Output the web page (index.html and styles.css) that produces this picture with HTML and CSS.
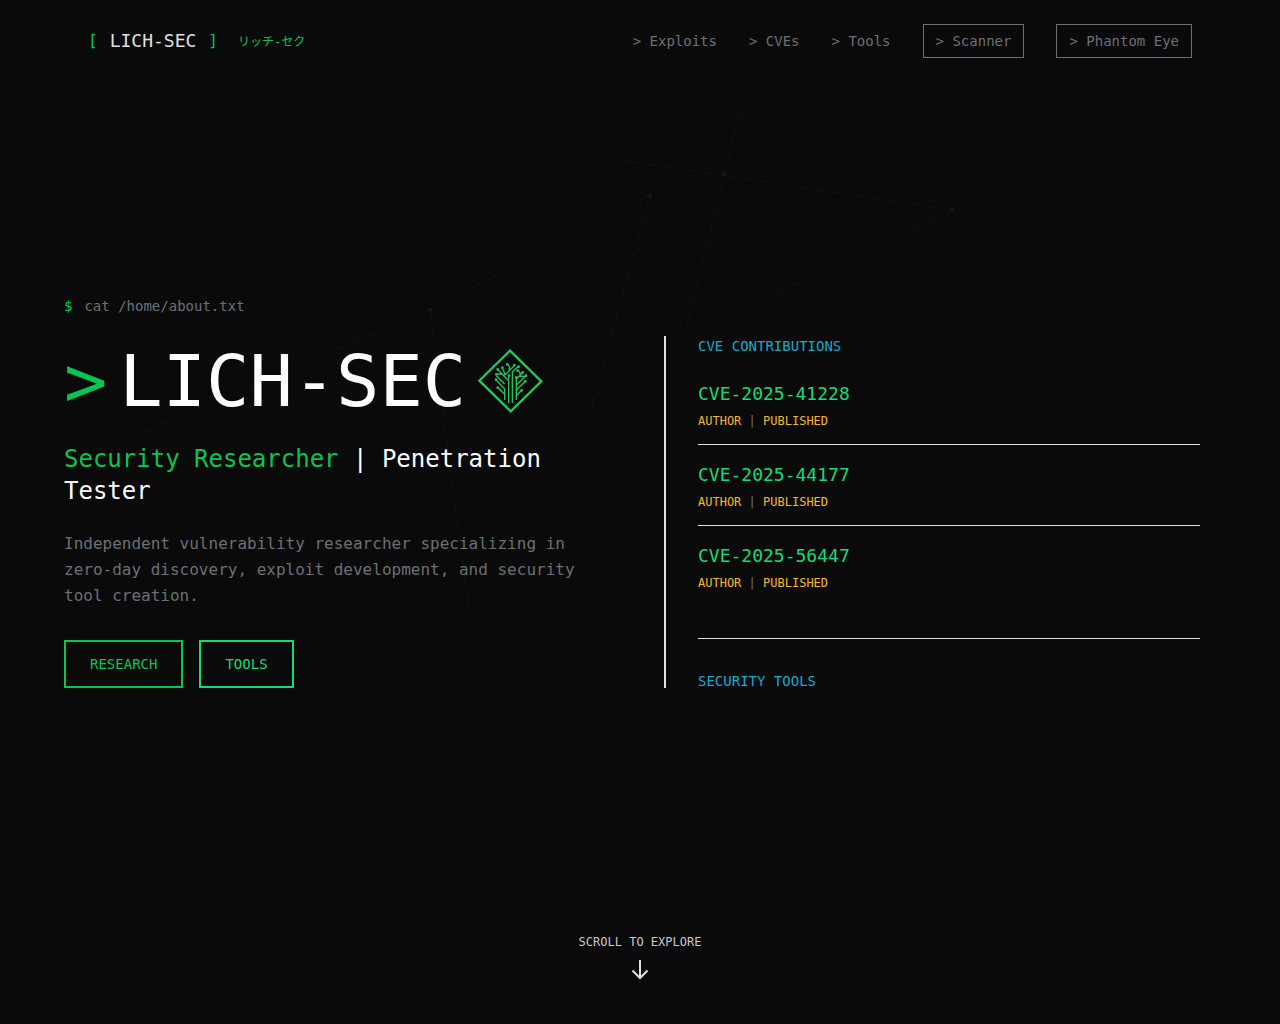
FILE: index.html
```html
<!DOCTYPE html>
<html lang="en">
<head>
<meta charset="utf-8">
<meta name="viewport" content="width=device-width, initial-scale=1">
<title>LICH-SEC</title>
<link rel="stylesheet" href="styles.css">
</head>
<body>
<svg class="network" viewBox="0 0 1280 1024" preserveAspectRatio="xMidYMid slice" aria-hidden="true">
  <path d="M626 161 952 210 686 336M952 210 780 390M740 110 724 176 686 330M650 195 430 310 135 436M650 195 588 420M430 310 470 620M515 752 526 785M588 420 560 450"/>
  <circle cx="952" cy="210" r="2"/><circle cx="650" cy="196" r="2"/><circle cx="430" cy="310" r="2"/><circle cx="724" cy="174" r="2"/>
</svg>
<div class="page">
  <header class="header">
    <a class="brand" href="#">
      <span class="bracket">[</span>
      <span class="brand-name">LICH-SEC</span>
      <span class="bracket">]</span>
      <span class="brand-kana" lang="ja">リッチ-セク</span>
    </a>
    <nav class="nav">
      <a href="#exploits">&gt; Exploits</a>
      <a href="#cves">&gt; CVEs</a>
      <a href="#tools">&gt; Tools</a>
      <a class="boxed" href="#scanner">&gt; Scanner</a>
      <a class="boxed" href="#phantom">&gt; Phantom Eye</a>
    </nav>
  </header>

  <main class="hero">
    <p class="prompt"><span class="dollar">$</span>cat /home/about.txt</p>
    <div class="columns">
      <section class="intro">
        <h1 class="title">
          <span class="caret">&gt;</span>
          <span>LICH-SEC</span>
          <svg class="logo" viewBox="24 27 192 192" aria-hidden="true">
            <path class="frame" d="M120 32 214 124 122 214 28 122Z"/>
            <path class="trace" d="M104 180V146L78 120M104 163 84 143M116 189V122L96 102H80M104 132 79 107M127 189V96L146 78M100 105 82 88M104 106V100L97 84M106 104 134 76M118 92V80L112 73M116 118V108M139 180V136L168 107M139 150 166 124M139 167 156 150M139 136V112M139 118 158 98M150 108V98L143 90M148 109H166"/>
            <g class="node"><circle cx="78" cy="119" r="4"/><circle cx="79" cy="103" r="4"/><circle cx="83" cy="143" r="4"/><circle cx="83" cy="88" r="4"/><circle cx="97" cy="83" r="4"/><circle cx="112" cy="73" r="4"/><circle cx="133" cy="75" r="4"/><circle cx="146" cy="80" r="4"/><circle cx="143" cy="92" r="4"/><circle cx="158" cy="97" r="4"/><circle cx="168" cy="107" r="4"/><circle cx="166" cy="124" r="4"/><circle cx="155" cy="151" r="4"/><circle cx="117" cy="107" r="4"/><circle cx="139" cy="112" r="4"/></g>
          </svg>
        </h1>
        <h2 class="role"><span>Security Researcher</span> | Penetration Tester</h2>
        <p class="bio">Independent vulnerability researcher specializing in zero-day discovery, exploit development, and security tool creation.</p>
        <div class="actions">
          <button class="btn" type="button">RESEARCH</button>
          <button class="btn btn-bright" type="button">TOOLS</button>
        </div>
      </section>

      <aside class="panel">
        <section>
          <h3 class="panel-heading">CVE CONTRIBUTIONS</h3>
          <ul class="cves">
            <li><a href="#cve-2025-41228">CVE-2025-41228</a><p class="meta">AUTHOR <span>|</span> PUBLISHED</p></li>
            <li><a href="#cve-2025-44177">CVE-2025-44177</a><p class="meta">AUTHOR <span>|</span> PUBLISHED</p></li>
            <li><a href="#cve-2025-56447">CVE-2025-56447</a><p class="meta">AUTHOR <span>|</span> PUBLISHED</p></li>
          </ul>
        </section>
        <section class="panel-next">
          <h3 class="panel-heading">SECURITY TOOLS</h3>
        </section>
      </aside>
    </div>
  </main>

  <footer class="scroll">
    <span>SCROLL TO EXPLORE</span>
    <svg class="arrow" viewBox="0 0 24 24" aria-hidden="true"><path d="M12 2V20M4.500 12.500l7.500 7.500 7.500-7.500"/></svg>
  </footer>
</div>
</body>
</html>
```
FILE: styles.css
```css
:root {
  --bg: #0a0a0a;
  --green: #08c454;
  --bright: #12dc76;
  --line: #e0e0e0;
  --muted: #6b7075;
}

* { box-sizing: border-box; }

body {
  margin: 0;
  background: var(--bg);
  color: #fff;
  font-family: "DejaVu Sans Mono", "Noto Sans CJK JP", monospace;
}

h1, h2, h3, p, ul { margin: 0; padding: 0; font-weight: 400; }
ul { list-style: none; }
a { color: inherit; text-decoration: none; }

.network {
  position: absolute;
  inset: 0;
  width: 100%;
  height: 100%;
  z-index: -1;
  fill: #0e2015;
  stroke: #0f1310;
  stroke-width: 1;
}
.network path { fill: none; stroke-dasharray: 14 5; }

.page {
  display: flex;
  flex-direction: column;
  min-height: 100vh;
}

.header {
  display: flex;
  align-items: center;
  justify-content: space-between;
  padding: 24px 88px;
}
.brand { display: flex; align-items: center; gap: 12px; }
.brand-name { font-size: 18px; line-height: 28px; color: var(--line); }
.bracket { font-size: 16px; line-height: 24px; color: var(--green); }
.brand-kana {
  margin-left: 8px;
  padding-top: 2px;
  font-size: 12px;
  line-height: 16px;
  color: var(--green);
}
.nav {
  display: flex;
  align-items: center;
  gap: 32px;
  font-size: 14px;
  line-height: 20px;
  color: var(--muted);
}
.boxed { padding: 6px 12px; border: 1px solid var(--muted); }

.hero {
  flex: 1;
  display: flex;
  flex-direction: column;
  justify-content: center;
  gap: 20px;
  padding: 0 64px;
}
.prompt {
  display: flex;
  gap: 12px;
  font-size: 14px;
  line-height: 20px;
  color: var(--muted);
}
.dollar { color: var(--green); }

.columns {
  display: grid;
  grid-template-columns: 1fr 1fr;
  gap: 48px;
}
.title {
  display: flex;
  align-items: center;
  gap: 12px;
  font-size: 72px;
  line-height: 90px;
}
.caret { color: var(--green); }
.logo { width: 64px; height: 64px; overflow: visible; fill: none; stroke: #22c55e; }
.frame { stroke-width: 7; }
.trace { stroke-width: 4; }
.node { fill: #22c55e; stroke: none; }
.role { margin-top: 17px; font-size: 24px; line-height: 32px; }
.role span { color: var(--green); }
.bio {
  margin-top: 24px;
  font-size: 16px;
  line-height: 26px;
  color: var(--muted);
}
.actions { display: flex; gap: 16px; margin-top: 31px; }
.btn {
  padding: 12px 24px;
  border: 2px solid var(--green);
  background: transparent;
  color: var(--green);
  font: inherit;
  font-size: 14px;
  line-height: 20px;
  cursor: pointer;
}
.btn-bright { border-color: var(--bright); color: var(--bright); }

/* The panel takes its height from the intro column and scrolls inside it. */
.panel {
  height: 0;
  min-height: 100%;
  overflow-y: auto;
  scrollbar-width: none;
  padding: 0 16px 0 32px;
  border-left: 2px solid var(--line);
}
.panel-heading { font-size: 14px; line-height: 20px; color: #17a9c9; }
.cves { margin-top: 8px; }
.cves li { padding: 16px 0 15px; border-bottom: 1px solid var(--line); }
.cves li:last-child { border-bottom: 0; }
.cves a { display: block; font-size: 18px; line-height: 28px; color: var(--bright); }
.meta { margin-top: 5px; font-size: 12px; line-height: 16px; color: #f5b82a; }
.meta span { color: var(--muted); }
.panel-next { margin-top: 32px; padding-top: 32px; border-top: 1px solid var(--line); }

.scroll {
  display: flex;
  flex-direction: column;
  align-items: center;
  gap: 8px;
  padding: 32px 64px 42px;
  font-size: 12px;
  line-height: 16px;
  color: #c8c8c8;
}
.arrow { width: 24px; height: 24px; fill: none; stroke: var(--line); stroke-width: 2; }
```
